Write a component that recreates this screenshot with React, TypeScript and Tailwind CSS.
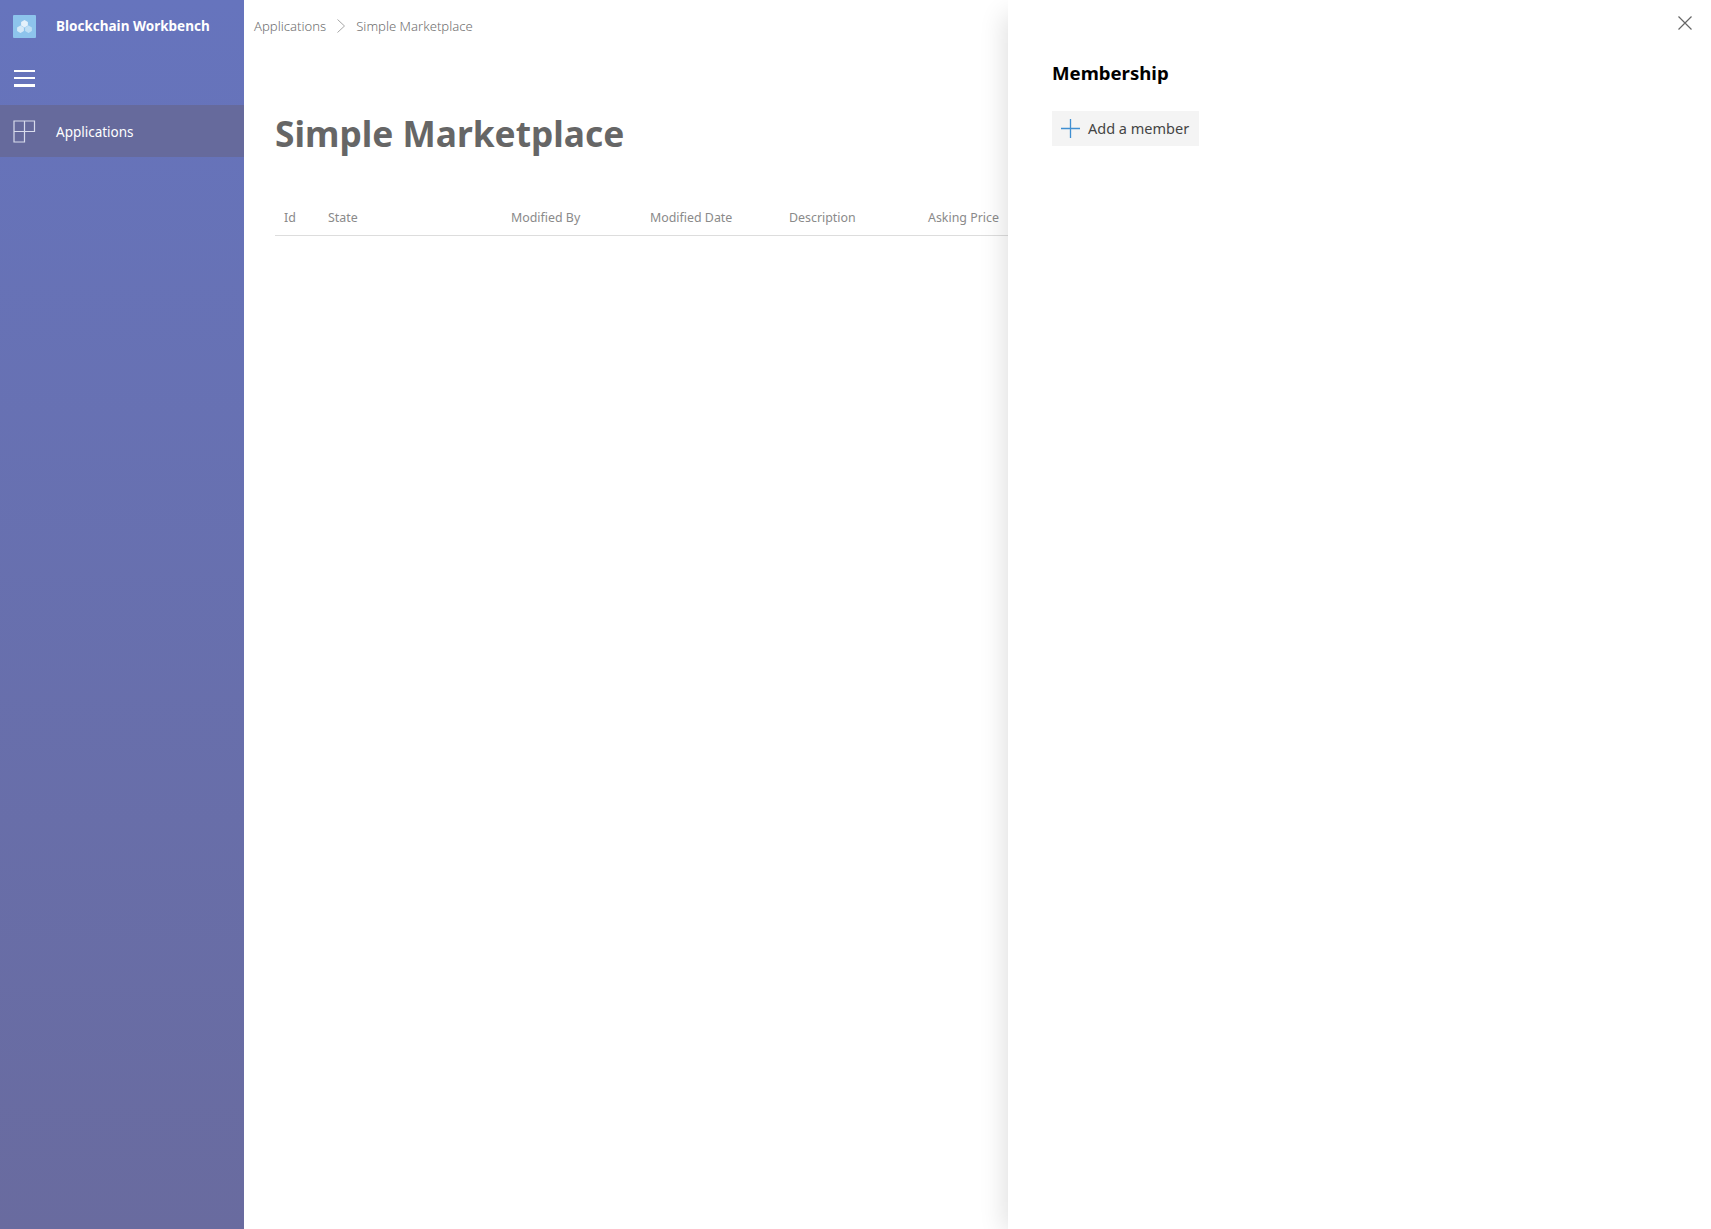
import React from 'react';

const columns = ['Id', 'State', 'Modified By', 'Modified Date', 'Description', 'Asking Price'];

const LogoIcon = () => (
  <svg width="23" height="23" viewBox="0 0 23 23">
    <rect width="23" height="23" rx="1" fill="#8dc4ec" />
    <path d="M11.5 5l3.400 1.900v3.600l-3.400 1.900-3.400-1.900V6.900z" fill="#e4f1fb" />
    <path d="M7.500 10.500l3.400 1.900v3.600l-3.400 1.900-3.400-1.900v-3.600z" fill="#d5e9f8" />
    <path d="M15.500 10.500l3.400 1.900v3.600l-3.400 1.900-3.400-1.900v-3.600z" fill="#bfdff5" />
  </svg>
);

const AppsIcon = () => (
  <svg width="23" height="23" viewBox="0 0 23 23" fill="none" stroke="#d8dbec" strokeWidth="1.200">
    <path d="M1 1h20.500v10.500H11.500V22H1zM1 11.500h10.500M11.500 1v10.500" />
  </svg>
);

const App: React.FC = () => {
  return (
    <div className="flex h-screen w-full overflow-hidden bg-white font-['Noto_Sans',sans-serif]">
      {/* Left nav */}
      <aside className="flex w-[244px] shrink-0 flex-col bg-gradient-to-b from-[#6674bd] to-[#696b9f] text-white">
        <div className="flex h-[52px] items-center">
          <div className="flex w-[49px] justify-center">
            <LogoIcon />
          </div>
          <span className="pl-[7px] text-[13.500px] font-bold">Blockchain Workbench</span>
        </div>
        <div className="flex h-[53px] flex-col justify-center gap-[5px] pl-[14px]">
          <div className="h-[2px] w-[21px] bg-white" />
          <div className="h-[2px] w-[21px] bg-white" />
          <div className="h-[3px] w-[21px] bg-white" />
        </div>
        <div className="flex h-[52px] items-center bg-[#666a9c]">
          <div className="flex w-[49px] justify-center">
            <AppsIcon />
          </div>
          <span className="pt-[2px] pl-[7px] text-[13.500px]">Applications</span>
        </div>
      </aside>

      {/* Main content */}
      <main className="min-w-0 flex-1 overflow-hidden">
        <div className="flex h-[52px] items-center pl-[10px] text-[13.100px] font-light text-[#6f6f6f]">
          <span className="pt-[2px]">Applications</span>
          <svg className="mx-[10px]" width="10" height="14" viewBox="0 0 10 14" fill="none" stroke="#a6a6a6">
            <path d="M1.500 0.500l7 6.500-7 6.500" />
          </svg>
          <span className="pt-[2px]">Simple Marketplace</span>
        </div>
        <div className="pl-[31px]">
          <h1 className="mt-[56px] text-[35.300px] leading-[50px] font-bold text-[#666666]">Simple Marketplace</h1>
          <div className="mt-[51px] grid grid-cols-[44px_183px_139px_139px_139px_88px] border-b border-[#dddddd] pb-[8px] text-[12.400px] leading-[18px] text-[#8a8a8a]">
            {columns.map((col) => (
              <div key={col} className="pl-[9px] whitespace-nowrap">
                {col}
              </div>
            ))}
          </div>
        </div>
      </main>

      {/* Membership panel */}
      <section className="relative z-10 flex w-[703px] shrink-0 flex-col bg-white pl-[44px] shadow-[-10px_8px_24px_-6px_rgba(0,0,0,0.12)]">
        <button className="absolute top-[16px] right-[19px] text-[#666666]">
          <svg className="block" width="14" height="14" viewBox="0 0 14 14" fill="none" stroke="currentColor" strokeWidth="1.200">
            <path d="M0.500 0.500l13 13M13.500 0.500l-13 13" />
          </svg>
        </button>
        <h2 className="mt-[59px] text-[18.600px] leading-[28px] font-bold text-black">Membership</h2>
        <button className="mt-[24px] flex h-[35px] w-[147px] items-center bg-[#f4f4f4] pl-[9px] text-[14.500px] text-[#444444]">
          <svg width="19" height="19" viewBox="0 0 19 19" fill="none" stroke="#3f8fd2" strokeWidth="1.300">
            <path d="M0 9.500h19M9.500 0v19" />
          </svg>
          <span className="pt-[1px] pl-[8px]">Add a member</span>
        </button>
      </section>
    </div>
  );
};

export default App;
